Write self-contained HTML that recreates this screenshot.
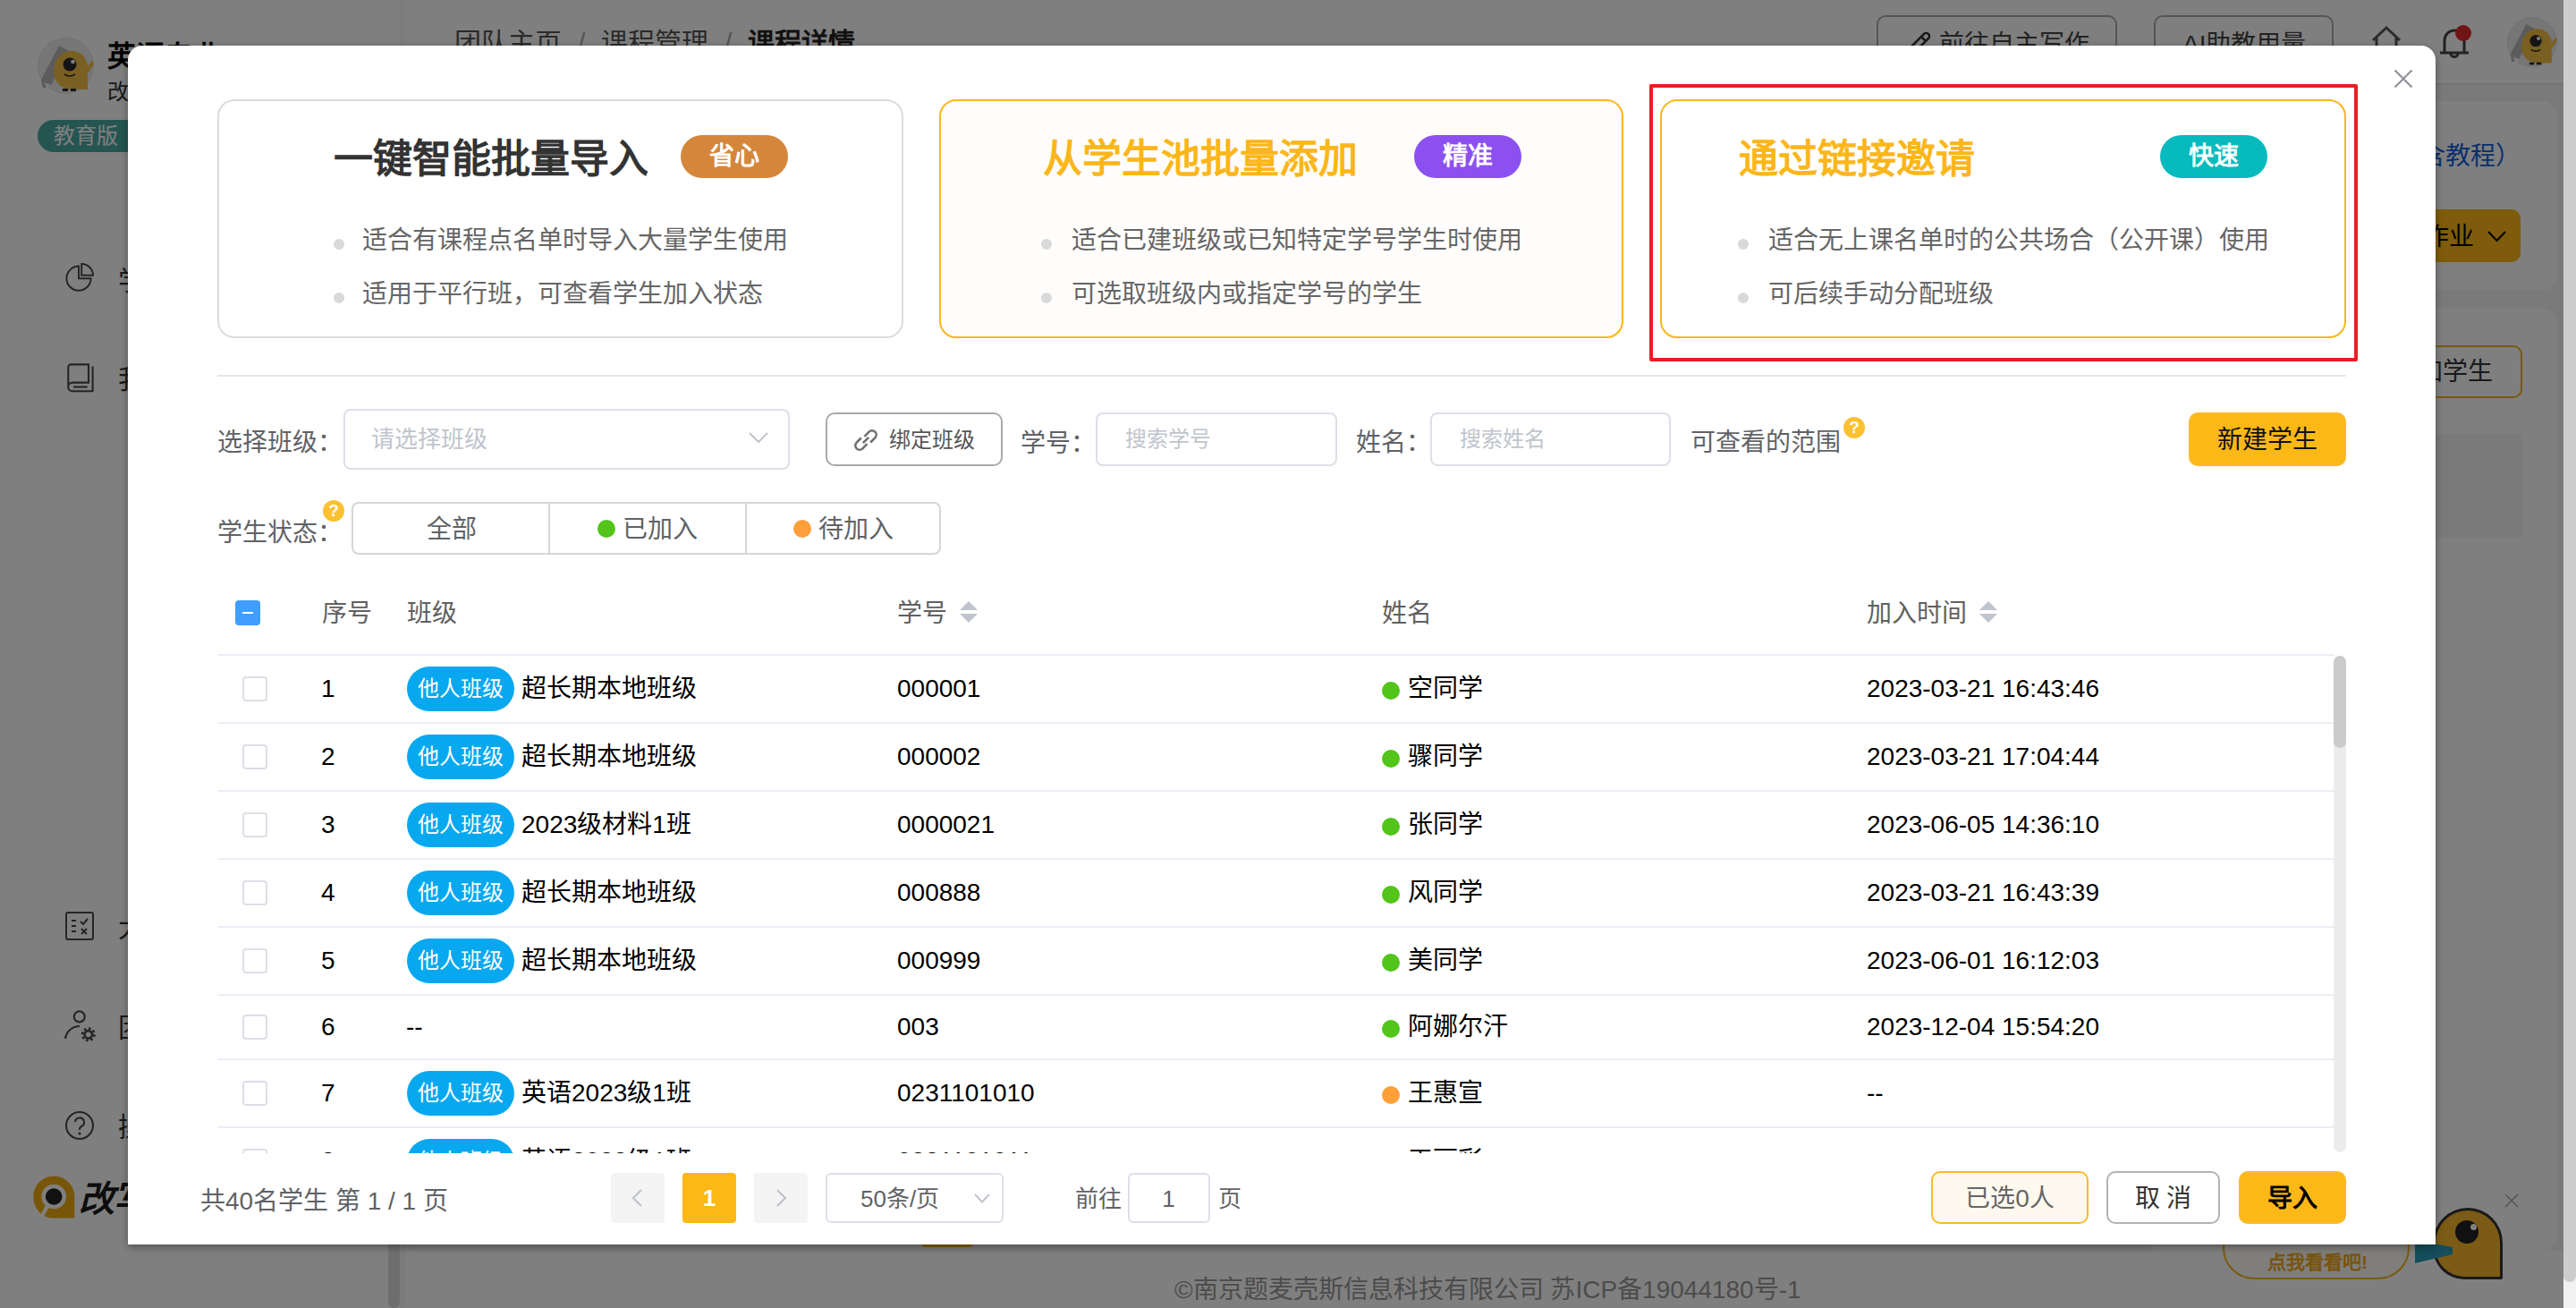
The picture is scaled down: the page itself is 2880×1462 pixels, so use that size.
<!DOCTYPE html>
<html lang="zh-CN"><head><meta charset="utf-8">
<style>
*{box-sizing:border-box;margin:0;padding:0}
html,body{width:2880px;height:1462px;overflow:hidden;background:#fff;font-family:"Liberation Sans",sans-serif}
.a{position:absolute}
.t{position:absolute;white-space:nowrap}
#bg{position:absolute;left:0;top:0;width:2880px;height:1462px;background:#f4f5f7;overflow:hidden}
#ov{position:absolute;left:0;top:0;width:2866px;height:1462px;background:rgba(0,0,0,.5)}
#modal{position:absolute;left:143px;top:51px;width:2580px;height:1340px;background:#fff;border-radius:16px 16px 0 0;box-shadow:0 3px 8px rgba(0,0,0,.35)}
.card{position:absolute;top:60px;height:267px;border:2px solid #dcdcdc;border-radius:19px;background:#fff}
.card.y{border-color:#fbb619}
.ttl{position:absolute;font-size:44px;font-weight:bold;line-height:60px;height:60px;white-space:nowrap}
.tag{position:absolute;width:120px;height:48px;border-radius:24px;color:#fff;font-weight:bold;font-size:28px;line-height:48px;text-align:center}
.dot{position:absolute;width:12px;height:12px;border-radius:6px;background:#d9d9d9}
.bl{position:absolute;font-size:28px;color:#666;line-height:40px;white-space:nowrap}
.lbl{position:absolute;font-size:28px;color:#606266;line-height:40px;white-space:nowrap}
.inp{position:absolute;border:2px solid #dcdfe6;border-radius:8px;background:#fff}
.ph{position:absolute;font-size:24px;color:#c0c4cc;line-height:40px;white-space:nowrap}
.qm{position:absolute;width:24px;height:24px;border-radius:12px;background:#fcc131;color:#fff;font-weight:bold;font-size:19px;line-height:24px;text-align:center}
.cb{position:absolute;width:28px;height:28px;border:2px solid #dcdfe6;border-radius:4px;background:#fff}
.rl{position:absolute;left:100px;width:2366px;height:2px;background:#ebeef5}
.cell{position:absolute;font-size:28px;color:#000;line-height:40px;white-space:nowrap}
.ctag{position:absolute;width:120px;height:50px;border-radius:25px;background:#07a8ef;color:#fff;font-size:24px;line-height:50px;text-align:center}
.sdot{position:absolute;width:20px;height:20px;border-radius:10px}
.sort{position:absolute;width:20px;height:24px}
.sort:before{content:"";position:absolute;left:0;top:0;border-left:10px solid transparent;border-right:10px solid transparent;border-bottom:10px solid #c0c4cc}
.sort:after{content:"";position:absolute;left:0;top:14px;border-left:10px solid transparent;border-right:10px solid transparent;border-top:10px solid #c0c4cc}
.pbtn{position:absolute;width:60px;height:56px;border-radius:4px;background:#f4f4f5}
.btn{position:absolute;height:59px;border-radius:10px;font-size:28px;line-height:57px;text-align:center;white-space:nowrap}
</style></head><body>
<div id="bg">
  <!-- main content bg -->
  <div class="a" style="left:448px;top:95px;width:2418px;height:1303px;background:#f4f4f5"></div>
  <div class="a" style="left:448px;top:1398px;width:2418px;height:64px;background:#fff"></div>
  <!-- header -->
  <div class="a" style="left:448px;top:0;width:2418px;height:95px;background:#fff;border-bottom:2px solid #e9e9e9"></div>
  <div class="t" style="left:508px;top:26px;font-size:30px;line-height:44px;color:#555">团队主页</div>
  <div class="t" style="left:646px;top:26px;font-size:30px;line-height:44px;color:#aaa">/</div>
  <div class="t" style="left:672px;top:26px;font-size:30px;line-height:44px;color:#555">课程管理</div>
  <div class="t" style="left:810px;top:26px;font-size:30px;line-height:44px;color:#aaa">/</div>
  <div class="t" style="left:836px;top:26px;font-size:30px;line-height:44px;color:#222;font-weight:bold">课程详情</div>
  <div class="a" style="left:2098px;top:17px;width:269px;height:64px;border:2px solid #aaa;border-radius:10px"></div>
  <svg class="a" style="left:2130px;top:34px" width="30" height="30" viewBox="0 0 30 30"><path d="M3 28L5 20L21 4a3 3 0 0 1 5 5L10 25Z M18 7L23 12" fill="none" stroke="#333" stroke-width="2.5"/></svg>
  <div class="t" style="left:2168px;top:28px;font-size:28px;line-height:44px;color:#444">前往自主写作</div>
  <div class="a" style="left:2408px;top:17px;width:201px;height:64px;border:2px solid #aaa;border-radius:10px"></div>
  <div class="t" style="left:2440px;top:28px;font-size:28px;line-height:44px;color:#444">AI助教用量</div>
  <svg class="a" style="left:2650px;top:28px" width="36" height="36" viewBox="0 0 36 36"><path d="M3 17L18 3L33 17M7 14V33H29V14" fill="none" stroke="#555" stroke-width="3"/></svg>
  <svg class="a" style="left:2726px;top:28px" width="36" height="40" viewBox="0 0 36 40"><path d="M7 30V17a11 11 0 0 1 22 0V30M2 31H34M14 31.5a4 4 0 0 0 8 0" fill="none" stroke="#444" stroke-width="3"/></svg>
  <div class="a" style="left:2745px;top:28px;width:18px;height:18px;border-radius:9px;background:#e02828"></div>
  <svg class="a" style="left:2803px;top:19px" width="56" height="56" viewBox="0 0 63 63"><circle cx="31.5" cy="31.5" r="31" fill="#ececec" stroke="#e2e2e2" stroke-width="1"/><path d="M4 47L24 9L35 15L15 53L6 57Z" fill="#b9b9b9"/><path d="M7 50L15 53L11 56Z" fill="#fff"/><path d="M18 38C18 24 27 15 38 15C48 15 55 22 56 32L60 27C62 25 64 28 62 31L56 40L56 58L40 58C27 58 18 50 18 38Z" fill="#f4bf45"/><circle cx="36" cy="30" r="7.5" fill="#2a2a2a"/><circle cx="39.5" cy="27" r="2.3" fill="#fff"/><path d="M30 41Q36 45 42 41" fill="none" stroke="#2a2a2a" stroke-width="1.6"/><rect x="28" y="57" width="6" height="3" fill="#2a2a2a"/><rect x="37" y="57" width="6" height="3" fill="#2a2a2a"/></svg>
  
  
  <!-- right cards -->
  <div class="a" style="left:2400px;top:113px;width:459px;height:211px;border-radius:16px;background:#fff"></div>
  <div class="t" style="left:2678px;top:153px;font-size:28px;line-height:44px;color:#1060d8">包含教程）</div>
  <div class="a" style="left:2600px;top:234px;width:218px;height:59px;border-radius:10px;background:#fcb817"></div>
  <div class="t" style="left:2710px;top:243px;font-size:28px;line-height:44px;color:#000">作业</div>
  <svg class="a" style="left:2781px;top:258px" width="21" height="12" viewBox="0 0 21 12"><path d="M1 1L10.5 11L20 1" fill="none" stroke="#000" stroke-width="2"/></svg>
  <div class="a" style="left:2400px;top:345px;width:459px;height:1052px;border-radius:16px;background:#fff"></div>
  <div class="a" style="left:2600px;top:386px;width:220px;height:59px;border-radius:10px;border:2px solid #f2b01e"></div>
  <div class="t" style="left:2675px;top:394px;font-size:28px;line-height:44px;color:#333">添加学生</div>
  <div class="a" style="left:2450px;top:485px;width:370px;height:116px;background:#f5f5f5"></div>
  <!-- bottom under-modal remnants -->
  <div class="a" style="left:1029px;top:1370px;width:60px;height:24px;border-radius:6px;background:#fcb817"></div>
  <div class="t" style="left:1313px;top:1420px;font-size:28px;line-height:44px;color:#999">©南京题麦壳斯信息科技有限公司 苏ICP备19044180号-1</div>
  <div class="a" style="left:2485px;top:1360px;width:209px;height:70px;border-radius:35px;border:2px solid #f7b21a;background:#fffdf6"></div>
  <div class="t" style="left:2535px;top:1395px;font-size:21px;line-height:32px;color:#f0a81c;font-weight:bold">点我看看吧!</div>
  <div class="a" style="left:2720px;top:1350px;width:78px;height:80px;border-radius:40px 40px 2px 36px;background:#f6b62a;border:3px solid #333"></div>
  <div class="a" style="left:2745px;top:1364px;width:26px;height:26px;border-radius:13px;background:#222"></div><div class="a" style="left:2762px;top:1368px;width:7px;height:7px;border-radius:4px;background:#fff"></div>
  <div class="a" style="left:2700px;top:1378px;width:42px;height:40px;background:#2a9cb4;clip-path:polygon(0 20%,100% 40%,100% 60%,0 85%)"></div>
  <svg class="a" style="left:2800px;top:1334px" width="16" height="16" viewBox="0 0 16 16"><path d="M1 1L15 15M15 1L1 15" stroke="#aaa" stroke-width="1.6"/></svg>
  <!-- sidebar -->
  <div class="a" style="left:0;top:0;width:448px;height:1462px;background:#fff;box-shadow:2px 0 10px rgba(0,0,0,.08)"></div>
  <div class="a" style="left:434px;top:1380px;width:13px;height:82px;border-radius:6px;background:#ddd"></div>
  <svg class="a" style="left:42px;top:42px" width="63" height="63" viewBox="0 0 63 63"><circle cx="31.5" cy="31.5" r="31" fill="#ececec" stroke="#e2e2e2" stroke-width="1"/><path d="M4 47L24 9L35 15L15 53L6 57Z" fill="#b9b9b9"/><path d="M7 50L15 53L11 56Z" fill="#fff"/><path d="M18 38C18 24 27 15 38 15C48 15 55 22 56 32L60 27C62 25 64 28 62 31L56 40L56 58L40 58C27 58 18 50 18 38Z" fill="#f4bf45"/><circle cx="36" cy="30" r="7.5" fill="#2a2a2a"/><circle cx="39.5" cy="27" r="2.3" fill="#fff"/><path d="M30 41Q36 45 42 41" fill="none" stroke="#2a2a2a" stroke-width="1.6"/><rect x="28" y="57" width="6" height="3" fill="#2a2a2a"/><rect x="37" y="57" width="6" height="3" fill="#2a2a2a"/></svg>
  
  
  
  <div class="t" style="left:120px;top:40px;font-size:32px;line-height:46px;color:#000;font-weight:bold">英语专业</div>
  <div class="t" style="left:120px;top:86px;font-size:24px;line-height:34px;color:#333">改写</div>
  <div class="a" style="left:42px;top:134px;width:150px;height:36px;border-radius:18px;background:#4aaba3"></div>
  <div class="t" style="left:60px;top:134px;font-size:24px;line-height:36px;color:#fff">教育版</div>
  <svg class="a" style="left:72px;top:294px" width="34" height="34" viewBox="0 0 34 34"><g fill="none" stroke="#4a4a4a" stroke-width="2"><path d="M16 3.6A13.6 13.6 0 1 0 29.6 17.2H16Z"/><path d="M19.2 1A12.8 12.8 0 0 1 32 13.8H19.2Z"/></g></svg>
  <div class="t" style="left:132px;top:292px;font-size:30px;line-height:44px;color:#333">学情</div>
  <svg class="a" style="left:74px;top:404px" width="34" height="36" viewBox="0 0 34 36"><g fill="none" stroke="#4a4a4a" stroke-width="2.1"><path d="M2.3 29V6.4A3 3 0 0 1 5.3 3.4H25V23.6H7A4.85 4.85 0 0 0 7 33.3H29.6V5.4"/><path d="M8 28.5H23.7"/></g></svg>
  <div class="t" style="left:132px;top:402px;font-size:30px;line-height:44px;color:#333">我的</div>
  <svg class="a" style="left:72px;top:1018px" width="34" height="34" viewBox="0 0 34 34"><rect x="2" y="2" width="30" height="30" rx="2" fill="none" stroke="#4a4a4a" stroke-width="2"/><path d="M8 11H13M8 17H13M8 23H13M18 12l3 3 5-6M19 20l6 6M25 20l-6 6" fill="none" stroke="#4a4a4a" stroke-width="2"/></svg>
  <div class="t" style="left:132px;top:1015px;font-size:30px;line-height:44px;color:#333">大作</div>
  <svg class="a" style="left:70px;top:1128px" width="38" height="36" viewBox="0 0 38 36"><circle cx="18.8" cy="8.4" r="6" fill="none" stroke="#4a4a4a" stroke-width="2.2"/><path d="M3 33a16 16 0 0 1 16-14" fill="none" stroke="#4a4a4a" stroke-width="2.2"/><circle cx="28.8" cy="28.3" r="4.2" fill="none" stroke="#4a4a4a" stroke-width="2.6"/><circle cx="28.8" cy="28.3" r="6.6" fill="none" stroke="#4a4a4a" stroke-width="2.8" stroke-dasharray="2.6 2.58"/></svg>
  <div class="t" style="left:132px;top:1127px;font-size:30px;line-height:44px;color:#333">团队</div>
  <svg class="a" style="left:72px;top:1240px" width="34" height="36" viewBox="0 0 34 36"><circle cx="17" cy="18" r="15" fill="none" stroke="#4a4a4a" stroke-width="2.1"/><path d="M12 14a5 5 0 1 1 7 5c-2 1-2 2-2 4" fill="none" stroke="#4a4a4a" stroke-width="2.1"/><circle cx="17" cy="27" r="1.6" fill="#4a4a4a"/></svg>
  <div class="t" style="left:132px;top:1238px;font-size:30px;line-height:44px;color:#333">操作</div>
  <svg class="a" style="left:36px;top:1313px" width="50" height="50" viewBox="0 0 50 50"><path d="M24.2 1.5A23 23 0 0 0 1.2 24.5A23 23 0 0 0 24.2 48.5H47.3V24.5A23 23 0 0 0 24.2 1.5Z" fill="#f0ac12"/><circle cx="24.2" cy="24.5" r="13.8" fill="#fff"/><circle cx="24.2" cy="24.5" r="9.3" fill="#222"/><path d="M17 35L11 46" stroke="#fff" stroke-width="4.5"/></svg>
  
  <div class="t" style="left:88px;top:1314px;font-size:40px;line-height:52px;color:#1a1a1a;font-weight:bold;font-style:italic;letter-spacing:-2px">改写</div>
</div>
<!-- page scrollbar -->
<div class="a" style="left:2866px;top:0;width:14px;height:1462px;background:#f1f1f1"></div>
<div class="a" style="left:2866px;top:0;width:14px;height:1433px;border-radius:0 0 7px 7px;background:#cdcdcd"></div>
<div id="ov"></div>

<div id="modal">
  <!-- cards : modal origin (143,51) -->
  <div class="card" style="left:100px;width:767px"></div>
  <div class="card y" style="left:907px;width:765px;background:#fffdfb"></div>
  <div class="card y" style="left:1713px;width:767px"></div>

  <div class="ttl" style="left:230px;top:97px;color:#333">一键智能批量导入</div>
  <div class="tag" style="left:618px;top:100px;background:#d4873b">省心</div>
  <div class="dot" style="left:230px;top:216px"></div>
  <div class="bl" style="left:262px;top:198px">适合有课程点名单时导入大量学生使用</div>
  <div class="dot" style="left:230px;top:276px"></div>
  <div class="bl" style="left:262px;top:258px">适用于平行班，可查看学生加入状态</div>

  <div class="ttl" style="left:1023px;top:97px;color:#fbb619">从学生池批量添加</div>
  <div class="tag" style="left:1438px;top:100px;background:#8c50f0">精准</div>
  <div class="dot" style="left:1021px;top:216px"></div>
  <div class="bl" style="left:1055px;top:198px">适合已建班级或已知特定学号学生时使用</div>
  <div class="dot" style="left:1021px;top:276px"></div>
  <div class="bl" style="left:1055px;top:258px">可选取班级内或指定学号的学生</div>

  <div class="ttl" style="left:1801px;top:97px;color:#fbb619">通过链接邀请</div>
  <div class="tag" style="left:2272px;top:100px;background:#06babd">快速</div>
  <div class="dot" style="left:1800px;top:216px"></div>
  <div class="bl" style="left:1834px;top:198px">适合无上课名单时的公共场合（公开课）使用</div>
  <div class="dot" style="left:1800px;top:276px"></div>
  <div class="bl" style="left:1834px;top:258px">可后续手动分配班级</div>

  <!-- close X -->
  <svg class="a" style="left:2533px;top:26px" width="22" height="22" viewBox="0 0 22 22"><path d="M1.5 1.5L20.5 20.5M20.5 1.5L1.5 20.5" stroke="#909399" stroke-width="2.2"/></svg>

  <!-- divider -->
  <div class="a" style="left:100px;top:368px;width:2380px;height:2px;background:#e6e6e6"></div>

  <!-- filter row 1 -->
  <div class="lbl" style="left:100px;top:424px">选择班级：</div>
  <div class="inp" style="left:241px;top:406px;width:499px;height:68px"></div>
  <div class="ph" style="left:272px;top:420px;font-size:26px">请选择班级</div>
  <svg class="a" style="left:694px;top:432px" width="22" height="12" viewBox="0 0 22 12"><path d="M1 1L11 11L21 1" fill="none" stroke="#c0c4cc" stroke-width="2"/></svg>

  <div class="a" style="left:780px;top:410px;width:198px;height:60px;border:2px solid #a9a9a9;border-radius:10px"></div>
  <svg class="a" style="left:811px;top:427px" width="28" height="28" viewBox="0 0 28 28"><g fill="none" stroke="#707070" stroke-width="2.6"><path d="M12.5 9.8L17.6 4.7a4.7 4.7 0 0 1 6.7 6.7L19.2 16.5"/><path d="M15.5 18.2L10.4 23.3a4.7 4.7 0 0 1 -6.7 -6.7L8.8 11.5"/><path d="M10.8 17.2L17.2 10.8"/></g></svg>
  <div class="t" style="left:851px;top:421px;font-size:24px;color:#555;line-height:40px">绑定班级</div>

  <div class="lbl" style="left:998px;top:425px">学号：</div>
  <div class="inp" style="left:1082px;top:410px;width:270px;height:60px"></div>
  <div class="ph" style="left:1115px;top:420px">搜索学号</div>

  <div class="lbl" style="left:1373px;top:424px">姓名：</div>
  <div class="inp" style="left:1456px;top:410px;width:269px;height:60px"></div>
  <div class="ph" style="left:1489px;top:420px">搜索姓名</div>

  <div class="lbl" style="left:1747px;top:424px">可查看的范围</div>
  <div class="qm" style="left:1918px;top:415px">?</div>

  <div class="btn" style="left:2304px;top:410px;width:176px;height:60px;background:#fcb817;border:2px solid #fbba2a;color:#111">新建学生</div>

  <!-- status row -->
  <div class="lbl" style="left:100px;top:525px">学生状态：</div>
  <div class="qm" style="left:218px;top:508px">?</div>
  <div class="a" style="left:250px;top:510px;width:659px;height:59px;border:2px solid #d6d6d6;border-radius:8px"></div>
  <div class="a" style="left:470px;top:511px;width:2px;height:57px;background:#d6d6d6"></div>
  <div class="a" style="left:690px;top:511px;width:2px;height:57px;background:#d6d6d6"></div>
  <div class="lbl" style="left:334px;top:521px">全部</div>
  <div class="sdot" style="left:525px;top:530px;background:#52c41a"></div>
  <div class="lbl" style="left:553px;top:521px">已加入</div>
  <div class="sdot" style="left:744px;top:530px;background:#ff9f3a"></div>
  <div class="lbl" style="left:772px;top:521px">待加入</div>

  <!-- table header -->
  <div class="a" style="left:120px;top:620px;width:28px;height:28px;border-radius:4px;background:#409eff"></div>
  <div class="a" style="left:128px;top:633px;width:12px;height:2px;background:#fff"></div>
  <div class="cell" style="left:217px;top:615px;color:#606060;font-weight:500">序号</div>
  <div class="cell" style="left:312px;top:615px;color:#606060;font-weight:500">班级</div>
  <div class="cell" style="left:860px;top:615px;color:#606060;font-weight:500">学号</div>
  <div class="sort" style="left:930px;top:621px"></div>
  <div class="cell" style="left:1402px;top:615px;color:#606060;font-weight:500">姓名</div>
  <div class="cell" style="left:1944px;top:615px;color:#606060;font-weight:500">加入时间</div>
  <div class="sort" style="left:2070px;top:621px"></div>
  <div class="a" style="left:100px;top:680px;width:2366px;height:2px;background:#ebeef5"></div>

  <!-- table body -->
  <div class="a" id="tb" style="left:100px;top:682px;width:2366px;height:555.5px;overflow:hidden">
<div class="cb" style="left:28px;top:23px"></div>
<div class="cell" style="left:116px;top:17px">1</div>
<div class="ctag" style="left:212px;top:12px">他人班级</div>
<div class="cell" style="left:340px;top:17px">超长期本地班级</div>
<div class="cell" style="left:760px;top:17px">000001</div>
<div class="sdot" style="left:1302px;top:29px;background:#52c41a"></div>
<div class="cell" style="left:1331px;top:17px">空同学</div>
<div class="cell" style="left:1844px;top:17px">2023-03-21 16:43:46</div>
<div class="rl" style="left:0;top:74px"></div>
<div class="cb" style="left:28px;top:99px"></div>
<div class="cell" style="left:116px;top:93px">2</div>
<div class="ctag" style="left:212px;top:88px">他人班级</div>
<div class="cell" style="left:340px;top:93px">超长期本地班级</div>
<div class="cell" style="left:760px;top:93px">000002</div>
<div class="sdot" style="left:1302px;top:105px;background:#52c41a"></div>
<div class="cell" style="left:1331px;top:93px">骤同学</div>
<div class="cell" style="left:1844px;top:93px">2023-03-21 17:04:44</div>
<div class="rl" style="left:0;top:150px"></div>
<div class="cb" style="left:28px;top:175px"></div>
<div class="cell" style="left:116px;top:169px">3</div>
<div class="ctag" style="left:212px;top:164px">他人班级</div>
<div class="cell" style="left:340px;top:169px">2023级材料1班</div>
<div class="cell" style="left:760px;top:169px">0000021</div>
<div class="sdot" style="left:1302px;top:181px;background:#52c41a"></div>
<div class="cell" style="left:1331px;top:169px">张同学</div>
<div class="cell" style="left:1844px;top:169px">2023-06-05 14:36:10</div>
<div class="rl" style="left:0;top:226px"></div>
<div class="cb" style="left:28px;top:251px"></div>
<div class="cell" style="left:116px;top:245px">4</div>
<div class="ctag" style="left:212px;top:240px">他人班级</div>
<div class="cell" style="left:340px;top:245px">超长期本地班级</div>
<div class="cell" style="left:760px;top:245px">000888</div>
<div class="sdot" style="left:1302px;top:257px;background:#52c41a"></div>
<div class="cell" style="left:1331px;top:245px">风同学</div>
<div class="cell" style="left:1844px;top:245px">2023-03-21 16:43:39</div>
<div class="rl" style="left:0;top:302px"></div>
<div class="cb" style="left:28px;top:327px"></div>
<div class="cell" style="left:116px;top:321px">5</div>
<div class="ctag" style="left:212px;top:316px">他人班级</div>
<div class="cell" style="left:340px;top:321px">超长期本地班级</div>
<div class="cell" style="left:760px;top:321px">000999</div>
<div class="sdot" style="left:1302px;top:333px;background:#52c41a"></div>
<div class="cell" style="left:1331px;top:321px">美同学</div>
<div class="cell" style="left:1844px;top:321px">2023-06-01 16:12:03</div>
<div class="rl" style="left:0;top:378px"></div>
<div class="cb" style="left:28px;top:401px"></div>
<div class="cell" style="left:116px;top:395px">6</div>
<div class="cell" style="left:211px;top:395px">--</div>
<div class="cell" style="left:760px;top:395px">003</div>
<div class="sdot" style="left:1302px;top:407px;background:#52c41a"></div>
<div class="cell" style="left:1331px;top:395px">阿娜尔汗</div>
<div class="cell" style="left:1844px;top:395px">2023-12-04 15:54:20</div>
<div class="rl" style="left:0;top:450px"></div>
<div class="cb" style="left:28px;top:475px"></div>
<div class="cell" style="left:116px;top:469px">7</div>
<div class="ctag" style="left:212px;top:464px">他人班级</div>
<div class="cell" style="left:340px;top:469px">英语2023级1班</div>
<div class="cell" style="left:760px;top:469px">0231101010</div>
<div class="sdot" style="left:1302px;top:481px;background:#ff9f3a"></div>
<div class="cell" style="left:1331px;top:469px">王惠宣</div>
<div class="cell" style="left:1844px;top:469px">--</div>
<div class="rl" style="left:0;top:526px"></div>
<div class="cb" style="left:28px;top:551px"></div>
<div class="cell" style="left:116px;top:545px">8</div>
<div class="ctag" style="left:212px;top:540px">他人班级</div>
<div class="cell" style="left:340px;top:545px">英语2023级1班</div>
<div class="cell" style="left:760px;top:545px">0231101011</div>
<div class="sdot" style="left:1302px;top:557px;background:#52c41a"></div>
<div class="cell" style="left:1331px;top:545px">王丽彩</div>
<div class="cell" style="left:1844px;top:545px">--</div>
<div class="rl" style="left:0;top:602px"></div>
  </div>
  <div class="a" style="left:2466px;top:682px;width:14px;height:555px;border-radius:7px;background:#ececec"></div>
  <div class="a" style="left:2466px;top:682px;width:14px;height:103px;border-radius:7px;background:#cbcbcb"></div>

  <!-- footer -->
  <div class="t" style="left:81px;top:1272px;font-size:28px;color:#606266;line-height:40px">共40名学生 第 1 / 1 页</div>
  <div class="pbtn" style="left:540px;top:1260px"></div>
  <svg class="a" style="left:562px;top:1278px" width="14" height="20" viewBox="0 0 14 20"><path d="M12 1L3 10L12 19" fill="none" stroke="#c0c4cc" stroke-width="2.4"/></svg>
  <div class="a" style="left:620px;top:1260px;width:60px;height:56px;border-radius:4px;background:#fcb817;color:#fff;font-weight:bold;font-size:26px;line-height:56px;text-align:center">1</div>
  <div class="pbtn" style="left:700px;top:1260px"></div>
  <svg class="a" style="left:724px;top:1278px" width="14" height="20" viewBox="0 0 14 20"><path d="M2 1L11 10L2 19" fill="none" stroke="#c0c4cc" stroke-width="2.4"/></svg>
  <div class="inp" style="left:780px;top:1260px;width:199px;height:56px;border-radius:6px"></div>
  <div class="t" style="left:819px;top:1269px;font-size:26px;color:#606266;line-height:40px">50条/页</div>
  <svg class="a" style="left:946px;top:1283px" width="18" height="11" viewBox="0 0 18 11"><path d="M1 1L9 9.5L17 1" fill="none" stroke="#c0c4cc" stroke-width="2"/></svg>
  <div class="t" style="left:1059px;top:1269px;font-size:26px;color:#606266;line-height:40px">前往</div>
  <div class="inp" style="left:1118px;top:1260px;width:92px;height:56px;border-radius:6px"></div>
  <div class="t" style="left:1118px;top:1269px;width:91px;text-align:center;font-size:26px;color:#606266;line-height:40px">1</div>
  <div class="t" style="left:1219px;top:1269px;font-size:26px;color:#606266;line-height:40px">页</div>

  <div class="btn" style="left:2016px;top:1258px;width:176px;height:59px;background:#fdf9ee;border:2px solid #fbb92a;color:#666">已选0人</div>
  <div class="btn" style="left:2212px;top:1258px;width:127px;height:59px;background:#fff;border:2px solid #b3b3b3;color:#333">取 消</div>
  <div class="btn" style="left:2360px;top:1258px;width:120px;height:59px;background:#fcb817;border:2px solid #fbba2a;color:#000;font-weight:bold">导入</div>
</div>

<!-- red annotation box -->
<div class="a" style="left:1844px;top:94px;width:792px;height:310px;border:4px solid #ec1c24;border-radius:2px"></div>

</body></html>
